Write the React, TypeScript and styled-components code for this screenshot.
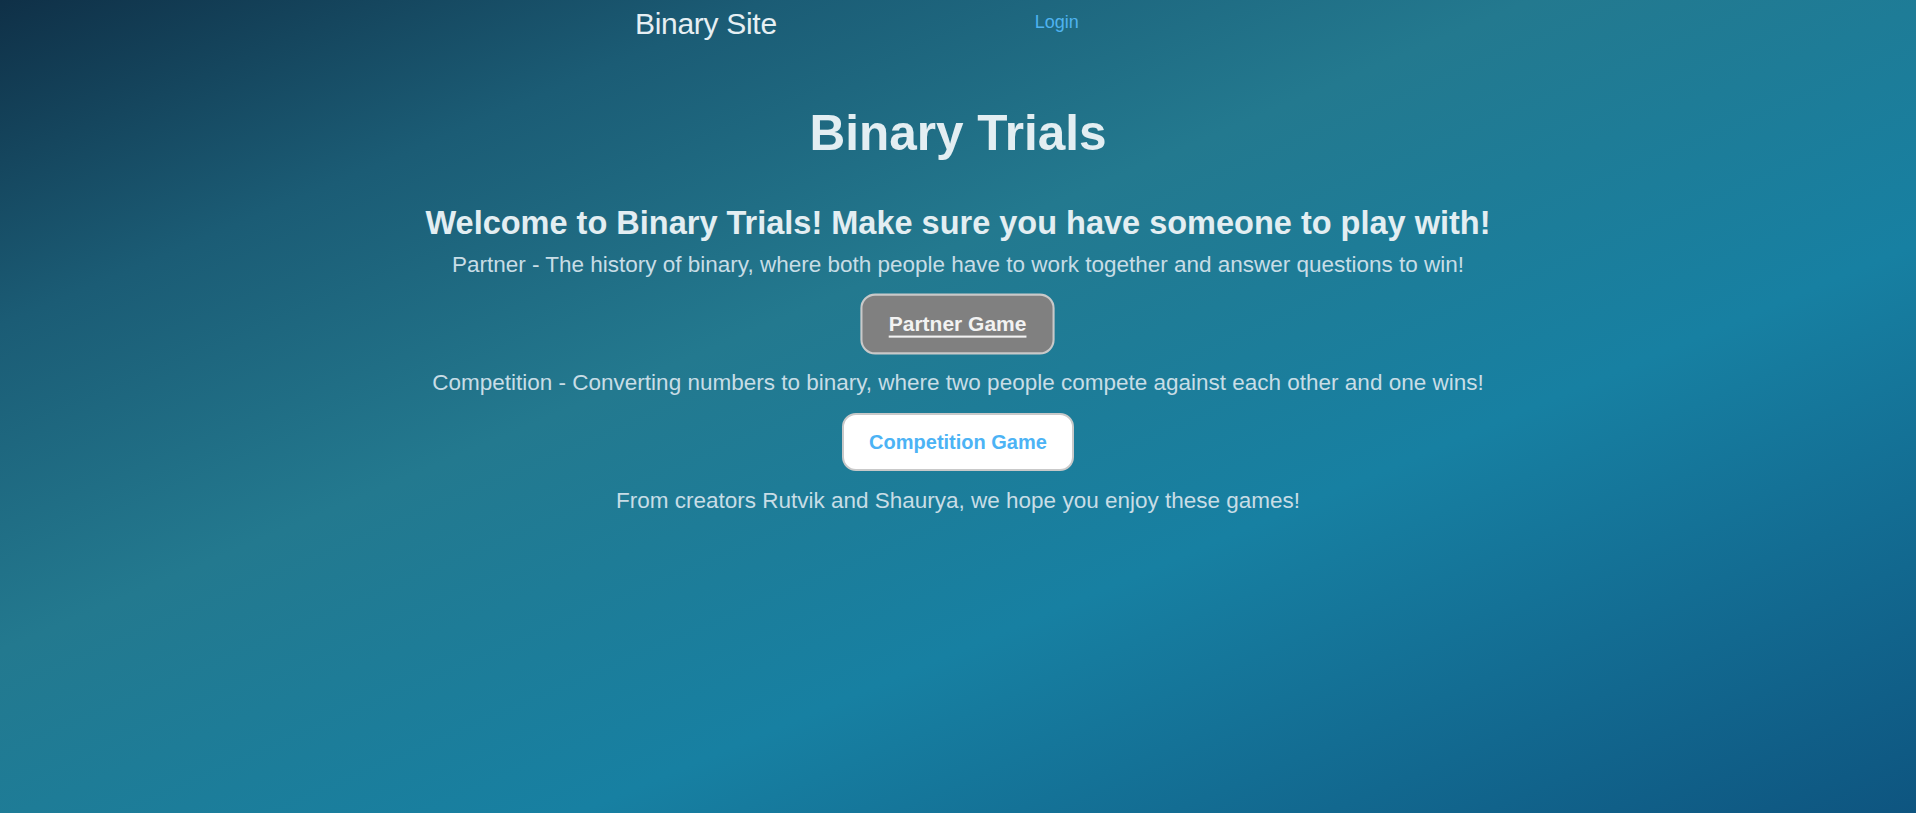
import React from "react";
import styled, { createGlobalStyle } from "styled-components";

const GlobalStyle = createGlobalStyle`
  html, body {
    margin: 0;
    padding: 0;
  }
  body {
    font-family: "Liberation Sans", Arial, sans-serif;
  }
`;

const Page = styled.div`
  min-height: 100vh;
  box-sizing: border-box;
  background: linear-gradient(
    to bottom right,
    #0f3047 0%,
    #1b5c75 20%,
    #23798f 40%,
    #1780a2 65%,
    #0e5580 100%
  );
  font-family: "Liberation Sans", Arial, sans-serif;
`;

const Nav = styled.nav`
  display: flex;
  align-items: flex-start;
  gap: 258px;
  padding: 4px 0 0 635px;
  height: 40px;
`;

const Brand = styled.div`
  font-size: 30px;
  line-height: 40px;
  color: #e6eff3;
  letter-spacing: -0.3px;
`;

const NavLink = styled.a`
  font-size: 18px;
  line-height: 40px;
  margin-top: -2px;
  color: #4fb3f0;
  text-decoration: none;
  cursor: pointer;
`;

const Main = styled.main`
  display: flex;
  flex-direction: column;
  align-items: center;
  text-align: center;
`;

const Title = styled.h1`
  margin: 60px 0 0;
  font-size: 49.5px;
  line-height: 57px;
  font-weight: 700;
  color: #e3eef2;
`;

const Welcome = styled.h2`
  margin: 43px 0 0;
  font-size: 32.5px;
  line-height: 38px;
  font-weight: 700;
  color: #e3eef2;
`;

const Desc = styled.p<{ $first?: boolean }>`
  margin: ${(p) => (p.$first ? "10px" : "17px")} 0 0;
  font-size: 22.5px;
  line-height: 26px;
  color: #c8dde6;
`;

const GameButton = styled.button<{ $active?: boolean }>`
  margin-top: 17px;
  padding: 15px 25px;
  font-family: "Liberation Sans", Arial, sans-serif;
  font-size: 20px;
  line-height: 24px;
  font-weight: 700;
  border: 2px solid #c9c9c9;
  border-radius: 14px;
  cursor: pointer;
  background: ${(p) => (p.$active ? "#808080" : "#ffffff")};
  color: ${(p) => (p.$active ? "#f2f2f2" : "#4cb3f5")};
  text-decoration: ${(p) => (p.$active ? "underline" : "none")};
  text-underline-offset: 4px;
  text-decoration-thickness: 2px;
  transform: ${(p) => (p.$active ? "scale(1.05)" : "none")};
`;

export default function App() {
  return (
    <>
      <GlobalStyle />
      <Page>
        <Nav>
          <Brand>Binary Site</Brand>
          <NavLink>Login</NavLink>
        </Nav>
        <Main>
          <Title>Binary Trials</Title>
          <Welcome>Welcome to Binary Trials! Make sure you have someone to play with!</Welcome>
          <Desc $first>
            Partner - The history of binary, where both people have to work together and answer questions to win!
          </Desc>
          <GameButton $active>Partner Game</GameButton>
          <Desc>
            Competition - Converting numbers to binary, where two people compete against each other and one wins!
          </Desc>
          <GameButton>Competition Game</GameButton>
          <Desc>From creators Rutvik and Shaurya, we hope you enjoy these games!</Desc>
        </Main>
      </Page>
    </>
  );
}
